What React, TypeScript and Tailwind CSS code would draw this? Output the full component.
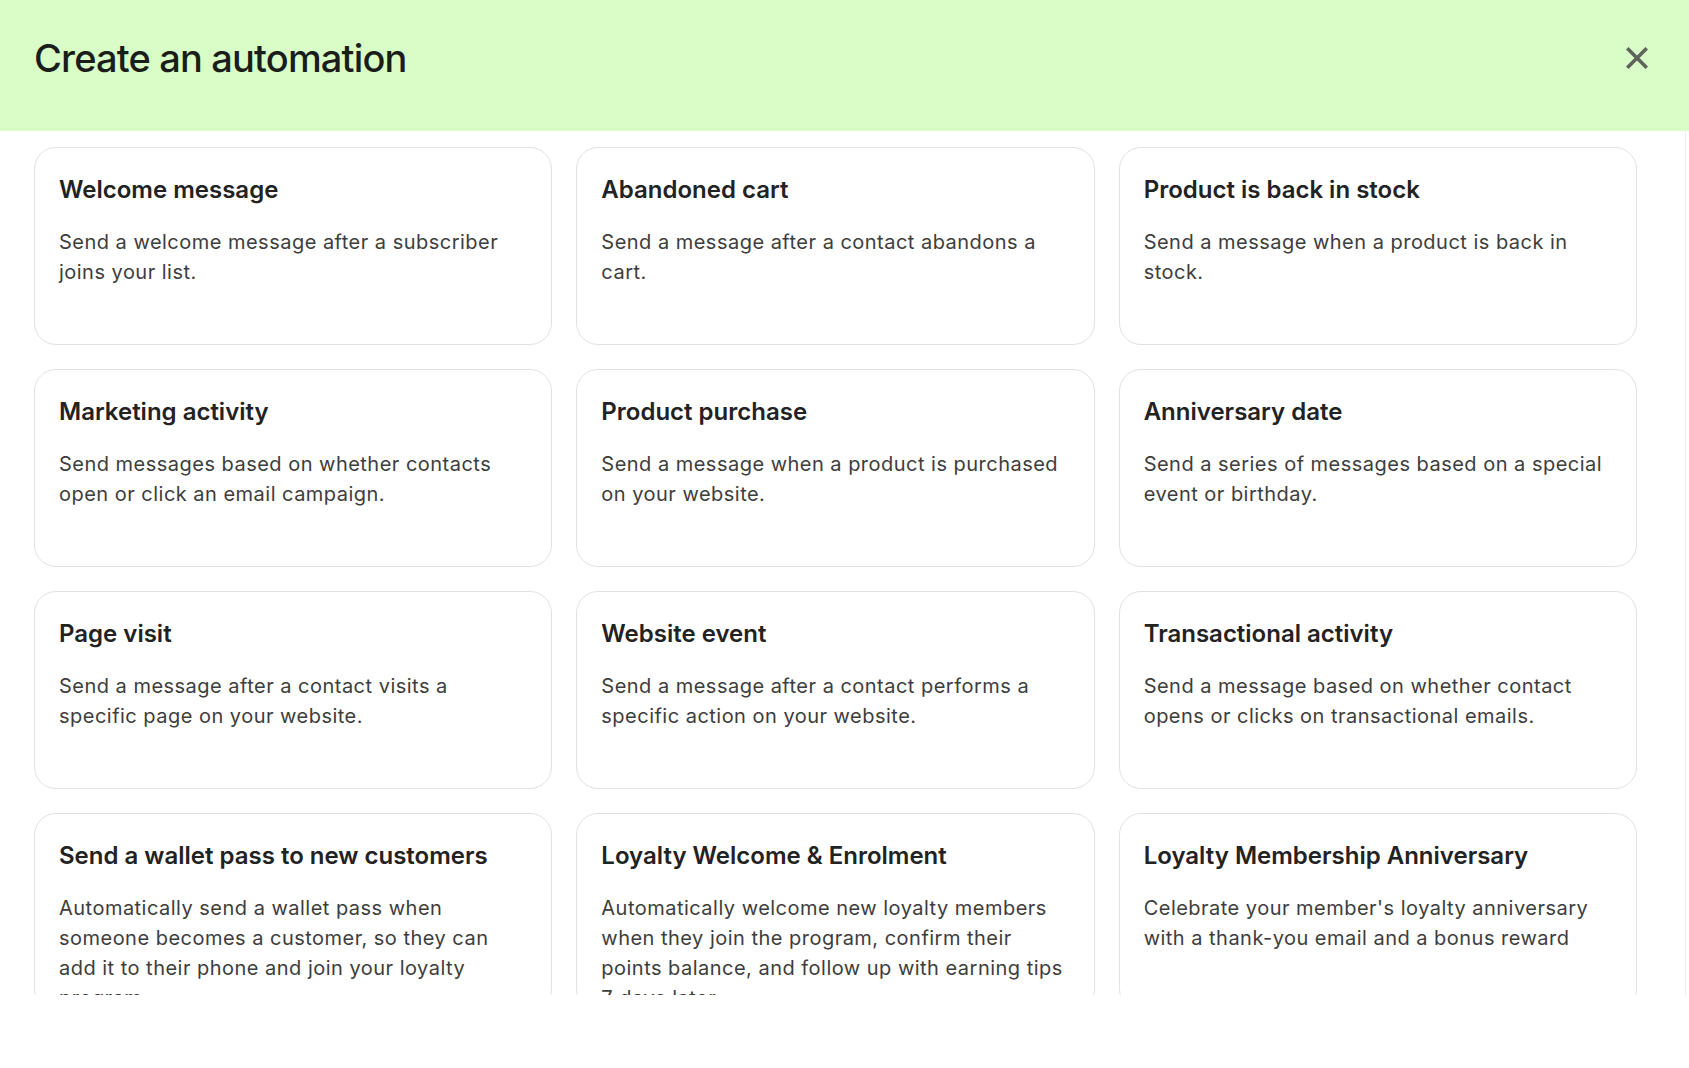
import React from "react";

const items: { title: string; desc: string }[] = [
  { title: "Welcome message", desc: "Send a welcome message after a subscriber joins your list." },
  { title: "Abandoned cart", desc: "Send a message after a contact abandons a cart." },
  { title: "Product is back in stock", desc: "Send a message when a product is back in stock." },
  { title: "Marketing activity", desc: "Send messages based on whether contacts open or click an email campaign." },
  { title: "Product purchase", desc: "Send a message when a product is purchased on your website." },
  { title: "Anniversary date", desc: "Send a series of messages based on a special event or birthday." },
  { title: "Page visit", desc: "Send a message after a contact visits a specific page on your website." },
  { title: "Website event", desc: "Send a message after a contact performs a specific action on your website." },
  { title: "Transactional activity", desc: "Send a message based on whether contact opens or clicks on transactional emails." },
  {
    title: "Send a wallet pass to new customers",
    desc: "Automatically send a wallet pass when someone becomes a customer, so they can add it to their phone and join your loyalty program.",
  },
  {
    title: "Loyalty Welcome & Enrolment",
    desc: "Automatically welcome new loyalty members when they join the program, confirm their points balance, and follow up with earning tips 7 days later.",
  },
  {
    title: "Loyalty Membership Anniversary",
    desc: "Celebrate your member's loyalty anniversary with a thank-you email and a bonus reward",
  },
];

export default function App() {
  return (
    <div className="flex h-[1068px] w-[1689px] flex-col overflow-hidden bg-white font-['Inter','Liberation_Sans',sans-serif]">
      <header className="flex h-[131px] shrink-0 items-start justify-between bg-[#d9fdc6] pl-[34px] pr-[41px] pt-[35px]">
        <h1 className="text-[38px] font-medium leading-[46px] tracking-[-0.022em] text-[#1b1d1a]">
          Create an automation
        </h1>
        <button className="flex h-[46px] w-[22px] items-center justify-center" aria-label="Close">
          <svg width="22" height="22" viewBox="0 0 22 22" fill="none">
            <path d="M2.5 2.5L19.5 19.5M19.5 2.5L2.5 19.5" stroke="#5f645d" strokeWidth="3.6" strokeLinecap="square" />
          </svg>
        </button>
      </header>
      <div className="flex h-[864px] shrink-0 overflow-hidden">
        <div className="flex-1 overflow-hidden pl-[34px] pr-[48px] pt-[16px]">
          <div className="grid grid-cols-3 gap-x-[24px] gap-y-[24px]">
            {items.map((it) => (
              <div
                key={it.title}
                className="h-[198px] rounded-[22px] border border-[#e2e2e2] bg-white pl-[24px] pr-[30px] pt-[26px]"
              >
                <h2 className="text-[24px] font-semibold leading-[32px] text-[#222222]">{it.title}</h2>
                <p className="mt-[21px] text-[20px] leading-[30px] tracking-[0.024em] text-[#3d3d3d]">{it.desc}</p>
              </div>
            ))}
          </div>
        </div>
        <div className="w-[4px] border-l border-[#efefef]" />
      </div>
      <div className="flex-1 bg-white" />
    </div>
  );
}
